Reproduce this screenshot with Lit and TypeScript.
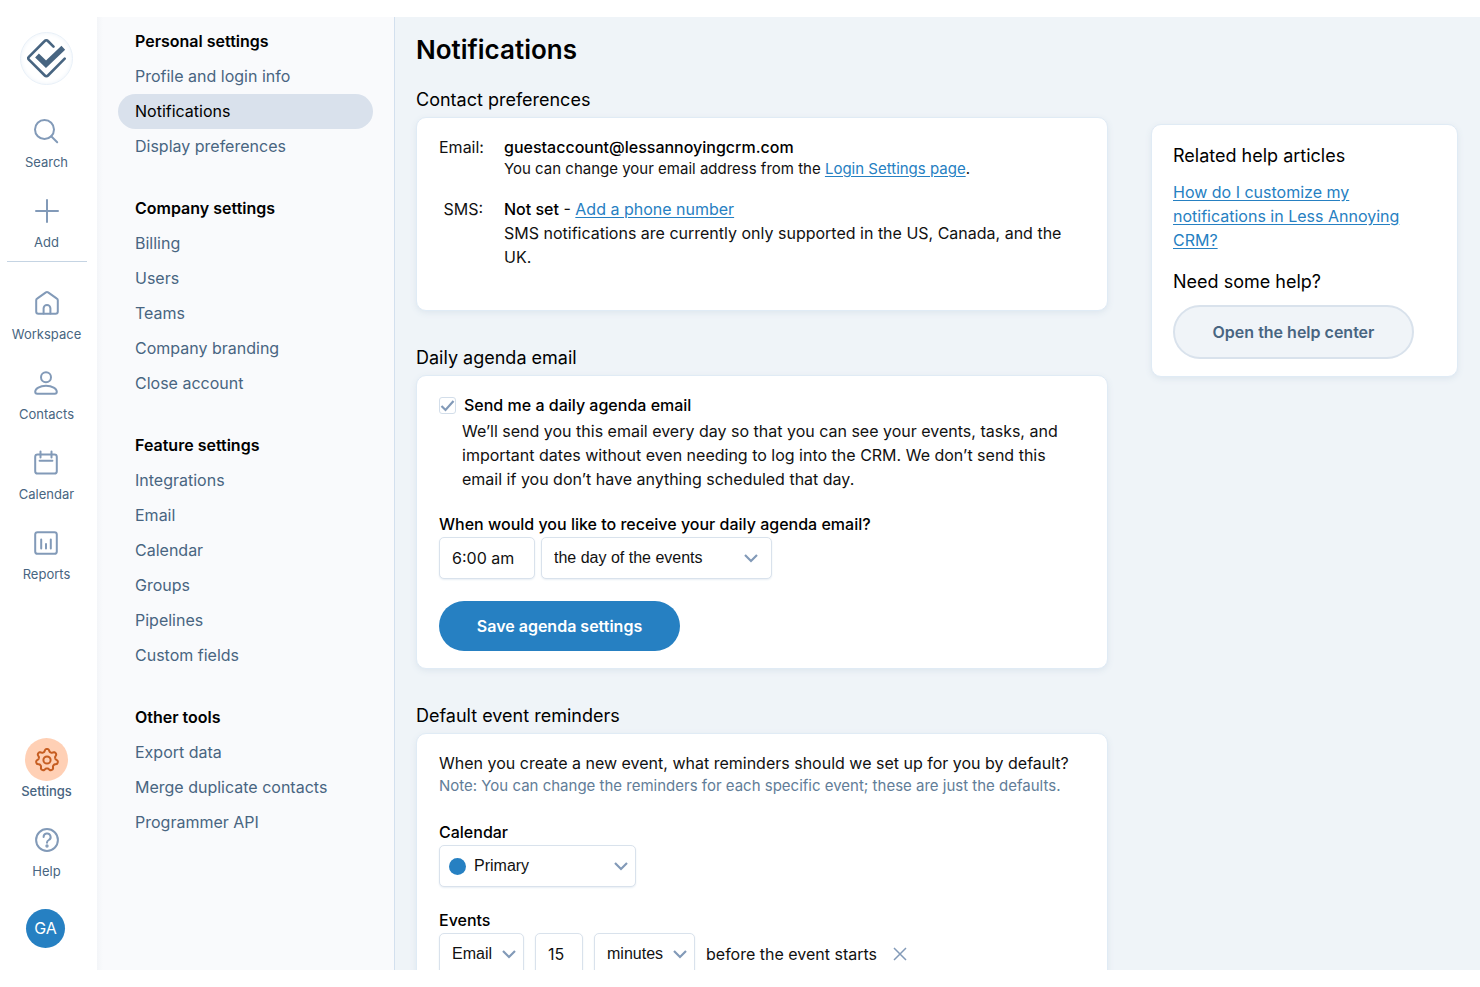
import { LitElement, html, css, svg, nothing, TemplateResult } from "lit";
import { customElement } from "lit/decorators.js";
import { classMap } from "lit/directives/class-map.js";

interface RailItem {
  label: string;
  icon: TemplateResult;
  active?: boolean;
}

// Outline of a gear with seven rounded teeth, one of them pointing up.
const gearOutline = (() => {
  const points: string[] = [];
  for (let step = 0; step < 140; step++) {
    const angle = (step / 140) * Math.PI * 2;
    const radius = 9.7 + 1.4 * Math.tanh(1.6 * Math.cos(7 * angle));
    points.push(`${(12 + radius * Math.sin(angle)).toFixed(2)} ${(12 - radius * Math.cos(angle)).toFixed(2)}`);
  }
  return `M${points.join("L")}z`;
})();

const icons = {
  search: svg`<circle cx="10.5" cy="10.5" r="9.5"/><path d="M17.200 17.200l6 6"/>`,
  add: svg`<path d="M12 1v22M1 12h22"/>`,
  home: svg`<path d="M1.2 9.2c0-.7.3-1.2.9-1.600L10.9 1.400c.7-.5 1.500-.5 2.200 0l8.800 6.200c.6.4.9.9.9 1.600v11.300c0 1.200-1 2.200-2.200 2.200H3.400c-1.200 0-2.200-1-2.200-2.200z"/><path d="M8.600 22.500v-5.200a3.400 3.400 0 0 1 6.800 0v5.200"/>`,
  contact: svg`<circle cx="12" cy="6.300" r="5"/><path d="M12 14.800c-6.200 0-10.800 2.700-10.800 6 0 1.300.8 2 2 2h17.600c1.200 0 2-.7 2-2 0-3.300-4.600-6-10.800-6z"/>`,
  calendar: svg`<rect x="1.200" y="3.400" width="21.600" height="19.200" rx="2.400"/><path d="M6.500.600v5.800M17.500.600v5.800M5.600 9.800h12.800"/>`,
  report: svg`<rect x="1.200" y="1.200" width="21.600" height="21.600" rx="2.400"/><path d="M7.200 8.600v8.800M12 13v4.400M16.800 8.600v8.800"/>`,
  gear: svg`<circle cx="12" cy="12" r="3.600"/><path d=${gearOutline} />`,
  help: svg`<circle cx="12" cy="12" r="10.900"/><path d="M8.600 9a3.500 3.500 0 1 1 5.200 3c-1.200.7-1.800 1.300-1.800 2.400v.4"/><circle cx="12" cy="18" r=".7"/>`,
};

const glyph = (shape: TemplateResult) => html`
  <svg class="glyph" viewBox="0 0 24 24" aria-hidden="true">${shape}</svg>
`;

const chevron = html`
  <svg class="chevron" viewBox="0 0 14 9" aria-hidden="true"><path d="M1 1l6 6 6-6" /></svg>
`;

@customElement("nav-rail")
class NavRail extends LitElement {
  static styles = css`
    :host {
      display: flex;
      flex-direction: column;
      align-items: center;
      width: 97px;
      padding: 15px 4px 22px 0;
      box-sizing: border-box;
      background: #fff;
    }
    .logo {
      display: grid;
      place-items: center;
      width: 53px;
      height: 53px;
      margin-bottom: 24px;
      box-sizing: border-box;
      border: 1px solid #e8f0f8;
      border-radius: 50%;
      box-shadow: inset 0 0 4px #edf3f9;
    }
    .logo svg {
      width: 40px;
      height: 40px;
      fill: none;
      stroke: #486581;
    }
    .item {
      display: flex;
      flex-direction: column;
      align-items: center;
      height: 72px;
      color: #486581;
      font-size: 13px;
      line-height: 20px;
      text-decoration: none;
    }
    .item + .item {
      margin-top: 8px;
    }
    .badge {
      display: grid;
      place-items: center;
      width: 43px;
      height: 43px;
      border-radius: 50%;
    }
    .active .badge {
      background: #ffd0b5;
    }
    .active {
      font-weight: 500;
    }
    .glyph {
      width: 24px;
      height: 24px;
      overflow: visible;
      fill: none;
      stroke: #829ab8;
      stroke-width: 2;
      stroke-linecap: round;
      stroke-linejoin: round;
    }
    .active .glyph {
      stroke: #c65d21;
    }
    .rule {
      width: 80px;
      margin: 0 0 19px;
      border: 0;
      border-top: 1px solid #c5d4e3;
    }
    .push {
      flex: 1;
    }
    .avatar {
      width: 39px;
      height: 39px;
      margin: 19px 2px 0 0;
      padding: 0;
      border: 0;
      border-radius: 50%;
      background: #2680c2;
      color: #fff;
      font: 16px/39px Inter, sans-serif;
    }
  `;

  private item({ label, icon, active }: RailItem) {
    return html`
      <a class=${classMap({ item: true, active: !!active })} href="#">
        <span class="badge">${glyph(icon)}</span>
        <span>${label}</span>
      </a>
    `;
  }

  render() {
    return html`
      <a class="logo" href="#" aria-label="Home">
        <svg viewBox="0.5 1 40 40">
          <path d="M27 8.600l-5.600-5.600a2.200 2.200 0 0 0-3.200 0L2.400 18.800a2 2 0 0 0 0 2.800l15.900 15.900a2.200 2.200 0 0 0 3.200 0L38.200 20.600" stroke-width="2.600" stroke-linecap="round" />
          <path d="M10.500 17.500l9 8.800L36.800 9.800" stroke-width="5.400" />
        </svg>
      </a>
      ${this.item({ label: "Search", icon: icons.search })}
      ${this.item({ label: "Add", icon: icons.add })}
      <hr class="rule" />
      ${[
        { label: "Workspace", icon: icons.home },
        { label: "Contacts", icon: icons.contact },
        { label: "Calendar", icon: icons.calendar },
        { label: "Reports", icon: icons.report },
      ].map((entry) => this.item(entry))}
      <span class="push"></span>
      ${this.item({ label: "Settings", icon: icons.gear, active: true })}
      ${this.item({ label: "Help", icon: icons.help })}
      <button class="avatar">GA</button>
    `;
  }
}

const settingGroups = [
  { title: "Personal settings", links: ["Profile and login info", "Notifications", "Display preferences"] },
  { title: "Company settings", links: ["Billing", "Users", "Teams", "Company branding", "Close account"] },
  { title: "Feature settings", links: ["Integrations", "Email", "Calendar", "Groups", "Pipelines", "Custom fields"] },
  { title: "Other tools", links: ["Export data", "Merge duplicate contacts", "Programmer API"] },
];

@customElement("settings-nav")
class SettingsNav extends LitElement {
  static styles = css`
    :host {
      display: flex;
      flex-direction: column;
      gap: 27px;
      width: 298px;
      padding: 7px 21px;
      box-sizing: border-box;
      background: linear-gradient(90deg, #f3f5f8, #f9fafc 6px);
      border-right: 1px solid #d3e0ee;
    }
    h2 {
      margin: 0;
      padding: 0 17px;
      font-size: 16px;
      font-weight: 600;
      line-height: 35px;
      color: #000;
    }
    ul {
      margin: 0;
      padding: 0;
      list-style: none;
    }
    .link {
      display: block;
      padding: 0 17px;
      border-radius: 18px;
      font-size: 16px;
      line-height: 35px;
      color: #486581;
      text-decoration: none;
    }
    .current {
      background: #d9e1ec;
      color: #000;
    }
  `;

  render() {
    return settingGroups.map(
      (group) => html`
        <section>
          <h2>${group.title}</h2>
          <ul>
            ${group.links.map((name) => {
              const current = name === "Notifications";
              return html`<li>
                <a class=${classMap({ link: true, current })} href="#" aria-current=${current ? "page" : nothing}>${name}</a>
              </li>`;
            })}
          </ul>
        </section>
      `
    );
  }
}

@customElement("app-root")
class AppRoot extends LitElement {
  static styles = css`
    :host {
      display: flex;
      height: 100vh;
      padding: 17px 0;
      box-sizing: border-box;
      background: #fff;
      font-family: Inter, sans-serif;
      font-size: 16px;
      line-height: 24px;
      color: #111;
    }
    nav-rail,
    settings-nav {
      flex: none;
    }
    main {
      flex: 1;
      display: grid;
      grid-template-columns: minmax(0, 692px) minmax(0, 307px);
      justify-content: space-between;
      align-items: start;
      padding: 15px 22px 0 21px;
      overflow: hidden;
      background: #eff4f8;
    }
    h1 {
      margin: 0 0 20px;
      font-size: 26px;
      font-weight: 600;
      line-height: 36px;
      color: #000;
    }
    h2 {
      margin: 0 0 5px;
      font-size: 18px;
      font-weight: 400;
      line-height: 24px;
      color: #000;
    }
    p {
      margin: 0;
    }
    a {
      color: #2680c2;
      text-underline-offset: 2px;
    }
    .card {
      padding: 17px 22px;
      margin-bottom: 35px;
      border: 1px solid #e0ebf5;
      border-radius: 10px;
      background: #fff;
      box-shadow: 0 2px 6px #dde6ee;
    }
    .contact {
      display: grid;
      grid-template-columns: 44px 1fr;
      column-gap: 21px;
      row-gap: 18px;
      margin: 0;
      padding-bottom: 24px;
    }
    dt {
      text-align: right;
    }
    dd {
      margin: 0;
    }
    .strong {
      font-weight: 500;
      color: #000;
    }
    .small {
      font-size: 15px;
      line-height: 20px;
    }
    .muted {
      line-height: 22px;
      color: #627d98;
    }
    .check {
      display: flex;
      align-items: center;
      gap: 8px;
    }
    .check input {
      appearance: none;
      width: 17px;
      height: 17px;
      margin: 0;
      border: 1px solid #d3deea;
      border-radius: 3px;
      background: #fff
        url("data:image/svg+xml,%3Csvg xmlns='http://www.w3.org/2000/svg' viewBox='0 0 15 15'%3E%3Cpath d='M1.500 8l4 4 8-9' fill='none' stroke='%23829ab8' stroke-width='2.200'/%3E%3C/svg%3E");
    }
    .indent {
      padding: 2px 16px 0 23px;
    }
    .label {
      display: block;
      margin-bottom: 1px;
      font-weight: 500;
      color: #000;
    }
    .agenda-label {
      margin-top: 21px;
    }
    .row {
      display: flex;
      align-items: center;
    }
    .time-row {
      gap: 6px;
      margin-bottom: 22px;
    }
    .event-row {
      gap: 11px;
    }
    .field {
      height: 42px;
      padding: 0 12px;
      box-sizing: border-box;
      border: 1px solid #d9e2ec;
      border-radius: 5px;
      background: #fff;
      box-shadow: 0 1px 2px #e8eef4;
      font: 16px/24px Inter, sans-serif;
      color: #111;
    }
    .picker {
      display: grid;
      align-items: center;
    }
    .picker > * {
      grid-area: 1 / 1;
    }
    select.field {
      appearance: none;
      width: 100%;
      font-family: "Liberation Sans", Arial, sans-serif;
    }
    .chevron {
      justify-self: end;
      width: 14px;
      height: 9px;
      margin-right: 14px;
      fill: none;
      stroke: #829ab8;
      stroke-width: 2.200;
      pointer-events: none;
    }
    .tight .chevron {
      margin-right: 8px;
    }
    .time {
      width: 96px;
    }
    .when {
      width: 231px;
    }
    .calendar {
      width: 197px;
      margin-bottom: 21px;
    }
    .calendar select.field {
      padding-left: 34px;
    }
    .dot {
      z-index: 1;
      width: 17px;
      height: 17px;
      margin-left: 10px;
      border-radius: 50%;
      background: #2680c2;
    }
    .via {
      width: 85px;
    }
    .amount {
      width: 48px;
    }
    .unit {
      width: 101px;
    }
    .remove {
      display: grid;
      place-items: center;
      width: 24px;
      height: 24px;
      padding: 0;
      border: 0;
      background: none;
    }
    .remove svg {
      width: 14px;
      height: 14px;
      stroke: #829ab8;
      stroke-width: 1.500;
    }
    .save,
    .open {
      box-sizing: border-box;
      width: 241px;
      border-radius: 27px;
      font: 600 16px/24px Inter, sans-serif;
    }
    .save {
      height: 50px;
      border: 0;
      background: #2680c2;
      color: #fff;
    }
    .open {
      height: 54px;
      border: 2px solid #d9e2ec;
      background: #f0f4f8;
      color: #486581;
    }
    .intro {
      padding-bottom: 23px;
    }
    .help {
      margin-top: 92px;
      padding: 19px 21px 17px;
    }
    .help h2 {
      margin-bottom: 12px;
    }
    .help .need {
      margin: 18px 0 11px;
    }
  `;

  render() {
    return html`
      <nav-rail></nav-rail>
      <settings-nav></settings-nav>
      <main>
        <div>
          <h1>Notifications</h1>

          <h2>Contact preferences</h2>
          <section class="card">
            <dl class="contact">
              <dt>Email:</dt>
              <dd>
                <p class="strong">guestaccount@lessannoyingcrm.com</p>
                <p class="small">You can change your email address from the <a href="#">Login Settings page</a>.</p>
              </dd>
              <dt>SMS:</dt>
              <dd>
                <p><span class="strong">Not set</span> - <a href="#">Add a phone number</a></p>
                <p>SMS notifications are currently only supported in the US, Canada, and the UK.</p>
              </dd>
            </dl>
          </section>

          <h2>Daily agenda email</h2>
          <section class="card">
            <label class="check strong"><input type="checkbox" checked />Send me a daily agenda email</label>
            <p class="indent">
              We’ll send you this email every day so that you can see your events, tasks, and important dates without
              even needing to log into the CRM. We don’t send this email if you don’t have anything scheduled that day.
            </p>
            <label class="label agenda-label" for="time">When would you like to receive your daily agenda email?</label>
            <div class="row time-row">
              <input id="time" class="field time" type="text" value="6:00 am" />
              <div class="picker when">
                <select class="field" aria-label="Agenda day">
                  <option>the day of the events</option>
                </select>
                ${chevron}
              </div>
            </div>
            <button class="save">Save agenda settings</button>
          </section>

          <h2>Default event reminders</h2>
          <section class="card">
            <p>When you create a new event, what reminders should we set up for you by default?</p>
            <p class="small muted intro">
              Note: You can change the reminders for each specific event; these are just the defaults.
            </p>
            <label class="label" for="calendar">Calendar</label>
            <div class="picker tight calendar">
              <select id="calendar" class="field">
                <option>Primary</option>
              </select>
              <span class="dot"></span>
              ${chevron}
            </div>
            <label class="label" for="via">Events</label>
            <div class="row event-row">
              <div class="picker tight via">
                <select id="via" class="field">
                  <option>Email</option>
                </select>
                ${chevron}
              </div>
              <input class="field amount" type="text" value="15" aria-label="Amount" />
              <div class="picker tight unit">
                <select class="field" aria-label="Unit">
                  <option>minutes</option>
                </select>
                ${chevron}
              </div>
              <span>before the event starts</span>
              <button class="remove" aria-label="Remove reminder">
                <svg viewBox="0 0 14 14"><path d="M1 1l12 12M13 1L1 13" /></svg>
              </button>
            </div>
          </section>
        </div>

        <aside class="card help">
          <h2>Related help articles</h2>
          <a href="#">How do I customize my notifications in Less Annoying CRM?</a>
          <h2 class="need">Need some help?</h2>
          <button class="open">Open the help center</button>
        </aside>
      </main>
    `;
  }
}
